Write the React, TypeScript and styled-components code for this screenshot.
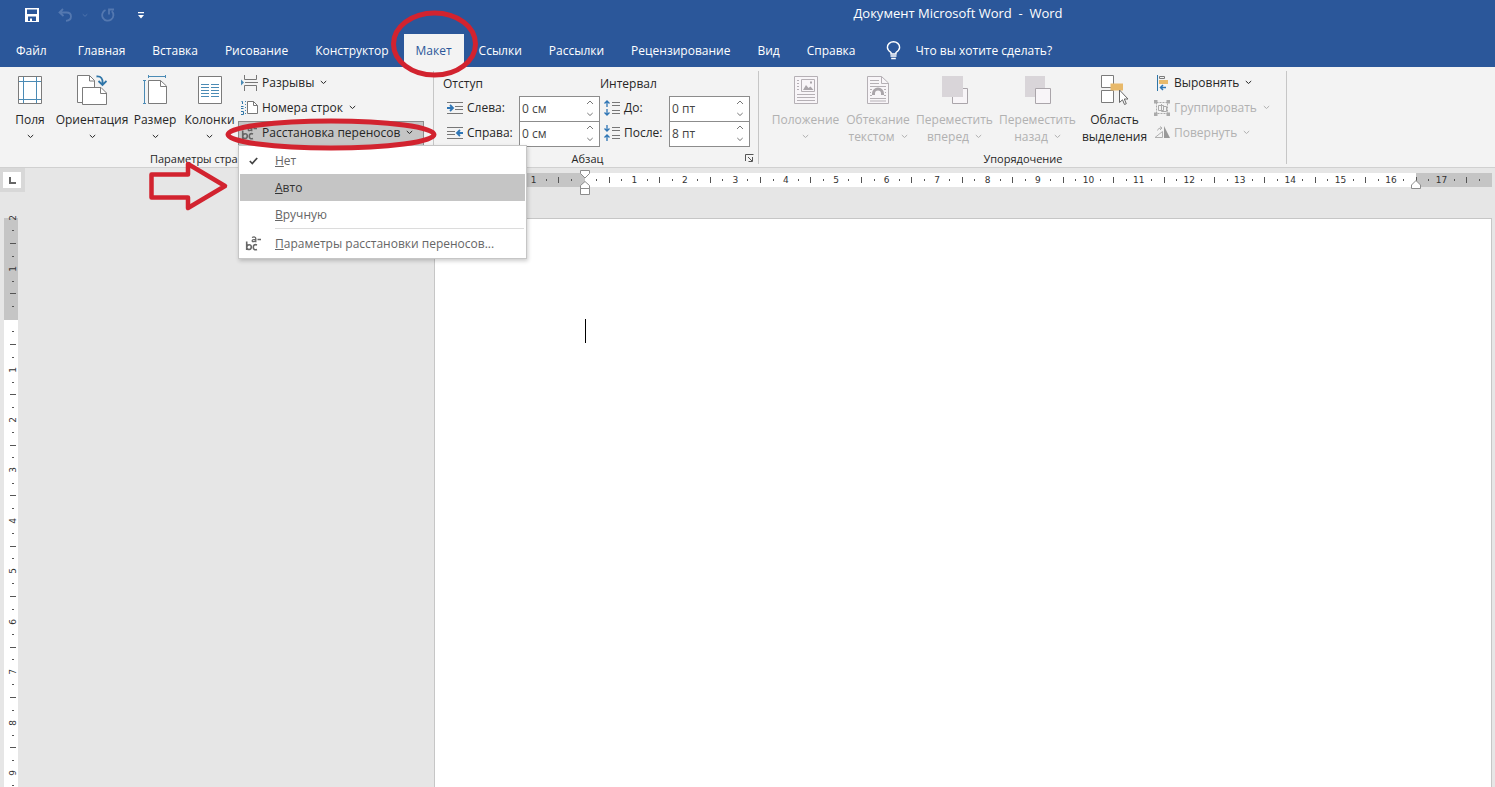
import React from "react";
import styled, { createGlobalStyle } from "styled-components";

const GlobalStyle = createGlobalStyle`
  *, *::before, *::after { box-sizing: border-box; }
  html, body, #root { height: 100%; margin: 0; }
  body {
    font-family: "Open Sans", "Noto Sans", sans-serif;
    font-size: 12px;
    color: #262626;
    background: #e6e6e6;
    overflow: hidden;
  }
  button, input { font: inherit; color: inherit; margin: 0; padding: 0; border: 0; background: none; }
  svg { display: block; flex: none; }
`;

const Shell = styled.div`
  position: relative;
  height: 100vh;
  display: flex;
  flex-direction: column;
  overflow: hidden;
`;

/* ---------- title bar and tabs ---------- */

const Header = styled.header`
  flex: none;
  background: #2b579a;
  color: #fff;
`;

const TitleBar = styled.div`
  display: flex;
  height: 34px;
`;

const QuickAccess = styled.div`
  flex: none;
  display: flex;
  align-items: center;
  width: 421px;
  height: 30px;
  padding-left: 16px;
`;

const QuickButton = styled.button<{ $w: number; $dim?: boolean }>`
  display: flex;
  justify-content: center;
  width: ${(p) => p.$w}px;
  color: ${(p) => (p.$dim ? "#5478b0" : "#fff")};
`;

const Title = styled.h1`
  flex: 1;
  margin: 0;
  font-size: 13px;
  font-weight: 400;
  line-height: 27px;
  text-align: center;
  white-space: pre;
`;

const Tabs = styled.nav`
  display: flex;
  gap: 3px;
  height: 33px;
  padding-left: 4px;
`;

const Tab = styled.button<{ $active?: boolean; $file?: boolean }>`
  flex: none;
  height: 33px;
  padding: 0 12px;
  margin-right: ${(p) => (p.$file ? 4 : 0)}px;
  line-height: 33px;
  white-space: nowrap;
  color: ${(p) => (p.$active ? "#2b579a" : "#fff")};
  background: ${(p) => (p.$active ? "#f3f3f3" : "transparent")};
`;

const TellMe = styled.button`
  display: flex;
  align-items: center;
  gap: 14px;
  margin-left: 16px;
  white-space: nowrap;
`;

/* ---------- ribbon ---------- */

const Ribbon = styled.section`
  flex: none;
  display: flex;
  height: 101px;
  padding-top: 4px;
  background: #f3f3f3;
  border-bottom: 1px solid #d0d0d0;
`;

const Group = styled.div<{ $w: number; $pad: number }>`
  position: relative;
  flex: none;
  display: flex;
  flex-direction: column;
  width: ${(p) => p.$w}px;
  height: 93px;
  padding-left: ${(p) => p.$pad}px;
  border-right: 1px solid #c6c6c6;
`;

const GroupBody = styled.div`
  display: flex;
  height: 75px;
`;

const GroupLabel = styled.div<{ $shift?: number }>`
  padding-right: ${(p) => p.$shift ?? 0}px;
  margin-top: 4px;
  font-size: 11px;
  line-height: 17px;
  text-align: center;
`;

const LargeButton = styled.button<{ $w: number }>`
  display: flex;
  flex-direction: column;
  align-items: center;
  flex: none;
  width: ${(p) => p.$w}px;
  padding-top: 4px;
  line-height: 17px;
  white-space: nowrap;

  &:disabled { color: #b1b1b1; }
  & > svg { margin-bottom: 6px; }
`;

const LabelLine = styled.span`
  display: flex;
  align-items: center;
  justify-content: center;
  gap: 6px;
  height: 17px;
`;

const SmallStack = styled.div<{ $ml: number }>`
  display: flex;
  flex-direction: column;
  align-items: flex-start;
  margin-left: ${(p) => p.$ml}px;
`;

const SmallButton = styled.button<{ $open?: boolean }>`
  display: flex;
  align-items: center;
  gap: 4px;
  height: 25px;
  padding: 0 ${(p) => (p.$open ? 10 : 4)}px 2px 2px;
  border: 1px solid ${(p) => (p.$open ? "#8c8c8c" : "transparent")};
  background: ${(p) => (p.$open ? "#c5c5c5" : "transparent")};
  white-space: nowrap;

  &:disabled { color: #b1b1b1; }
  & > svg:last-child { margin-left: 2px; }
`;

const MenuAnchor = styled.div`
  position: relative;
`;

const Menu = styled.div`
  position: absolute;
  z-index: 5;
  top: 24px;
  left: 0;
  width: 289px;
  padding: 1px;
  background: #fff;
  border: 1px solid #c6c6c6;
  box-shadow: 1px 2px 4px rgba(0, 0, 0, 0.2);
`;

const MenuItem = styled.button<{ $hover?: boolean }>`
  display: grid;
  grid-template-columns: 35px 1fr;
  align-items: center;
  width: 100%;
  height: 27px;
  text-align: left;
  color: ${(p) => (p.$hover ? "#333" : "#666")};
  background: ${(p) => (p.$hover ? "#c5c5c5" : "transparent")};
`;

const MenuRule = styled.div`
  height: 1px;
  margin: 0 1px 1px 35px;
  background: #dcdcdc;
`;

const FieldColumn = styled.div<{ $w: number }>`
  width: ${(p) => p.$w}px;
`;

const FieldTitle = styled.div`
  height: 25px;
  line-height: 25px;
`;

const FieldRow = styled.div`
  display: flex;
  align-items: center;
  height: 25px;
  padding-left: 4px;

  & > svg { margin-bottom: 2px; }
`;

const FieldLabel = styled.label<{ $w: number }>`
  width: ${(p) => p.$w}px;
  padding: 0 0 2px 4px;
  white-space: nowrap;
`;

const Spinner = styled.div`
  display: flex;
  width: 81px;
  height: 26px;
  background: #fff;
  border: 1px solid #8c8c8c;
`;

const SpinInput = styled.input`
  width: 60px;
  padding-left: 2px;
  outline: 0;
  color: #444;
`;

const SpinButtons = styled.div`
  display: flex;
  flex-direction: column;
  width: 19px;
`;

const SpinButton = styled.button`
  flex: 1;
  display: flex;
  align-items: center;
  justify-content: center;
  color: #777;
`;

const Launcher = styled.button`
  position: absolute;
  right: 4px;
  bottom: 1px;
  color: #555;
`;

/* ---------- workspace ---------- */

const Workspace = styled.main`
  flex: 1;
  min-height: 0;
  display: grid;
  grid-template-columns: 434px 1fr;
  grid-template-rows: 50px 1fr;
  padding-right: 3px;
  background: #e6e6e6;
`;

const Corner = styled.div`
  width: 25px;
  height: 24px;
  padding: 4px 4px 4px 3px;
  background: #d8d8d8;
`;

const TabSelector = styled.button`
  display: flex;
  align-items: center;
  justify-content: center;
  width: 18px;
  height: 16px;
  background: #fff;
`;

const HRuler = styled.div`
  position: relative;
  height: 14px;
  margin-top: 5px;
  background: linear-gradient(
    to right,
    #c5c5c5 calc(100% * 3 / 21),
    #fff calc(100% * 3 / 21) calc(100% * 39 / 42),
    #c5c5c5 calc(100% * 39 / 42)
  );
`;

const HMarks = styled.div`
  display: flex;
  height: 14px;
  margin: 0 7px 0 5px;
`;

const VRuler = styled.div`
  display: flex;
  flex-direction: column;
  width: 14px;
  height: 580px;
  margin: -6px 0 0 4px;
  padding-left: 3px;
  background: linear-gradient(to bottom, transparent 6px, #c5c5c5 6px 108px, #fff 108px);
`;

const VRulerCell = styled.div`
  min-height: 0;
`;

const Mark = styled.span<{ $up?: boolean }>`
  flex: 1 1 0;
  min-width: 0;
  min-height: 0;
  display: flex;
  align-items: center;
  justify-content: center;
  font-family: "DejaVu Sans", sans-serif;
  font-size: 9px;
  line-height: 12px;
  white-space: nowrap;
  color: #333;

  & > span { transform: ${(p) => (p.$up ? "rotate(-90deg)" : "none")}; }
`;

const Tick = styled.i<{ $w: number; $h: number }>`
  flex: none;
  width: ${(p) => p.$w}px;
  height: ${(p) => p.$h}px;
  background: #555;
`;

const IndentMarker = styled.div<{ $at: number; $top: number }>`
  position: absolute;
  left: calc(100% * ${(p) => p.$at} / 42 - 5px);
  top: ${(p) => p.$top}px;
`;

const Page = styled.article`
  min-height: 0;
  padding: 100px 150px 0;
  background: #fff;
  border: 1px solid #c6c6c6;
  border-bottom: 0;
`;

const Caret = styled.div`
  width: 1px;
  height: 24px;
  background: #000;
`;

const Annotations = styled.svg`
  position: absolute;
  z-index: 10;
  top: 0;
  left: 0;
  pointer-events: none;
`;

/* ---------- icons ---------- */

const Chevron = ({ up, size = 7 }: { up?: boolean; size?: number }) => (
  <svg width={size} height="5" viewBox="0 0 7 5" fill="none" stroke="currentColor" strokeWidth="1">
    <path d={up ? "M.5 4L3.5 1L6.5 4" : "M.8 1L3.5 3.500L6.200 1"} />
  </svg>
);

const SaveIcon = () => (
  <svg width="14" height="14" viewBox="0 0 14 14">
    <path fill="currentColor" fillRule="evenodd" d="M0 0H14V14H0ZM2 1.5V6H12V1.5ZM3 8.5V13H5V10.5H7V13H11V8.5Z" />
  </svg>
);

const UndoIcon = () => (
  <svg width="14" height="14" viewBox="0 0 14 14" fill="none" stroke="currentColor" strokeWidth="1.8">
    <path d="M5 1L1.5 4.5L5.5 8M1.5 4.5H8.5C11.5 4.5 13 6.3 13 8.5S11.5 12.5 8 12.8" />
  </svg>
);

const RedoIcon = () => (
  <svg width="14" height="14" viewBox="0 0 14 14" fill="none" stroke="currentColor" strokeWidth="1.8">
    <path d="M4.500 2A5.600 5.600 0 1 0 10.800 3.200M8 6.500V1.500H13" />
  </svg>
);

const CustomizeIcon = () => (
  <svg width="6" height="7" viewBox="0 0 6 7" fill="currentColor">
    <path d="M0 0H6V1.3H0ZM0 3H6L3 6.5Z" />
  </svg>
);

const BulbIcon = () => (
  <svg width="15" height="19" viewBox="0 0 15 19" fill="none" stroke="currentColor" strokeWidth="1.4">
    <path d="M5 13V11.5C3 10 1.4 8.8 1.4 6.4A6 5.6 0 0 1 13.6 6.4C13.6 8.8 12 10 10 11.5V13Z" />
    <path d="M4.5 15H10.5M5.2 17.5H9.8" strokeWidth="1.6" />
  </svg>
);

const MarginsIcon = () => (
  <svg width="24" height="30" viewBox="0 0 24 30" fill="none">
    <path d="M.5 1.5H23.5V28.5H.5Z" fill="#fff" stroke="#7b7b7b" />
    <path d="M5.5 2V28M18.5 2V28M1 6.5H23M1 24.5H23" stroke="#4b8bb5" />
  </svg>
);

const OrientationIcon = () => (
  <svg width="30" height="30" viewBox="0 0 30 30" fill="none" stroke="#7b7b7b">
    <path d="M.5 .5H12.5L17.5 5.5V27.5H.5Z" fill="#fff" />
    <path d="M12.5 .5V6H17.5" />
    <path d="M5.5 12.5H24L29.5 18V29.5H5.5Z" fill="#fff" />
    <path d="M23.5 12.5V18.5H29.5" />
    <path d="M19.5 1.5C24 1 26 3.5 25.5 9M21.5 6L25.5 10L29.5 6" stroke="#2e75a8" strokeWidth="1.8" />
  </svg>
);

const SizeIcon = () => (
  <svg width="24" height="30" viewBox="0 0 24 30" fill="none" stroke="#4b8bb5">
    <path d="M5 1.5H23M5.5 0V3M22.5 0V3M1.5 6V28M0 5.500H3M0 28.500H3" />
    <g stroke="#7b7b7b">
      <path d="M5.5 5.500H17.500L23.500 11V28.500H5.500Z" fill="#fff" />
      <path d="M17.500 5.500V11.500H23.500" />
    </g>
  </svg>
);

const ColumnsIcon = () => (
  <svg width="24" height="30" viewBox="0 0 24 30" fill="none">
    <path d="M.5 1.500H23.500V28.500H.5Z" fill="#fff" stroke="#7b7b7b" />
    <path d="M3 9.500H11M3 12.500H11M3 15.500H11M3 18.500H11M3 21.500H11M13 9.500H21M13 12.500H21M13 15.500H21M13 18.500H21M13 21.500H21" stroke="#4b8bb5" />
  </svg>
);

const BreaksIcon = () => (
  <svg width="17" height="16" viewBox="0 0 17 16" fill="none" stroke="#777">
    <path d="M3.500 0V4.500H15.500V0M3.500 16V10.500H15.500V16M4 7.500H17" />
    <path d="M0 4.500L3 7.500L0 10.500Z" fill="#4b8bb5" stroke="none" />
  </svg>
);

const LineNumbersIcon = () => (
  <svg width="17" height="16" viewBox="0 0 17 16" fill="none" stroke="#777">
    <path d="M6.500 1.500H12.500L16.500 5.500V13.500H6.500Z" fill="#fff" />
    <path d="M12.500 1.500V5.500H16.500" />
    <path d="M.5 1.500H1.500V4M0 6.500H2.500M0 8.500H2.500M0 11.500H2.500V14.500H0" stroke="#2e75a8" />
    <path d="M4.500 1V15" stroke="#4b8bb5" strokeDasharray="1 2" />
  </svg>
);

const HyphenIcon = () => (
  <svg width="17" height="16" viewBox="0 0 17 16" fill="none" stroke="#666" strokeWidth="1.600">
    <path d="M1.700 5.500V14M1.700 11C2.200 8 6.300 8 6.300 11S2.200 14.500 1.700 11.500M12 9C9.500 8 8.300 9.300 8.300 11.200S9.500 14.500 12 13.400" />
    <path d="M7 1.500C9 .6 10.800 .8 10.800 2.500V6.200M10.800 3.300C8 3.300 7 4 7.200 5S10 6 10.800 4.500M12.500 3.500H16" strokeWidth="1.300" />
  </svg>
);

const IndentIcon = ({ right }: { right?: boolean }) => (
  <svg width="16" height="14" viewBox="0 0 16 14" fill="none" stroke="#777">
    {right ? (
      <>
        <path d="M0 1.500H16M0 5.500H8M0 8.500H8M0 12.500H16" />
        <path d="M16 7H10M13 4L10 7L13 10" stroke="#2e75b5" strokeWidth="1.800" />
      </>
    ) : (
      <>
        <path d="M0 1.500H16M8 5.500H16M8 8.500H16M0 12.500H16" />
        <path d="M0 7H6M3 4L6 7L3 10" stroke="#2e75b5" strokeWidth="1.800" />
      </>
    )}
  </svg>
);

const SpacingIcon = ({ after }: { after?: boolean }) => (
  <svg width="16" height="16" viewBox="0 0 16 16" fill="none" stroke="#777">
    <path d="M8 2.500H16M8 5.500H16M8 10.500H16M8 13.500H16" />
    <path
      d={after ? "M3 0V6M.5 3.500L3 6L5.500 3.500M3 16V10M.5 12.500L3 10L5.500 12.500" : "M3 7V1M.5 3.500L3 1L5.500 3.500M3 9V15M.5 12.500L3 15L5.500 12.500"}
      stroke="#2e75b5"
      strokeWidth="1.300"
    />
  </svg>
);

const PositionIcon = () => (
  <svg width="24" height="30" viewBox="0 0 24 30" fill="none" stroke="#b5b0b5">
    <path d="M.5 1.500H23.500V28.500H.5Z" fill="#f8f5f8" />
    <path d="M7.500 4.500H20.500V16.500H7.500ZM3 5.500H5M3 8.500H5M3 11.500H5M3 14.500H5M3 19.500H21M3 22.500H21M3 25.500H21" />
    <path d="M9 15L12 10L14.500 13L16.500 11.500L19.500 15ZM16 6.500H18V8.500H16Z" fill="#aaa5aa" stroke="none" />
  </svg>
);

const WrapIcon = () => (
  <svg width="22" height="30" viewBox="0 0 22 30" fill="none" stroke="#b5b0b5">
    <path d="M.5 1.500H14.500L21.500 8V28.500H.5Z" fill="#f8f5f8" />
    <path d="M14.500 1.500V8.500H21.500M3 5.500H12M3 8.500H12M3 11.500H19M3 14.500H5M17 14.500H19M3 17.500H4M18 17.500H19M3 20.500H5M17 20.500H19M3 23.500H19M3 26H19" />
    <path d="M6.500 20V18.500A4.500 4.500 0 0 1 15.500 18.500V20" stroke="#aaa5aa" strokeWidth="3" />
  </svg>
);

const ForwardIcon = () => (
  <svg width="26" height="30" viewBox="0 0 26 30">
    <path d="M10.500 13.500H25.500V28.500H10.500Z" fill="#f8f5f8" stroke="#aaa5aa" />
    <path d="M0 1H21V22H0Z" fill="#d9d5d9" />
  </svg>
);

const BackwardIcon = () => (
  <svg width="26" height="30" viewBox="0 0 26 30">
    <path d="M0 1H20V22H0Z" fill="#d9d5d9" />
    <path d="M10.500 13.500H25.500V28.500H10.500Z" fill="#f8f5f8" stroke="#aaa5aa" />
  </svg>
);

const SelectionPaneIcon = () => (
  <svg width="28" height="30" viewBox="0 0 28 30">
    <path d="M.5 .5H12.500V12.500H.5ZM.5 15.500H12.500V27.500H.5Z" fill="#fff" stroke="#7b7b7b" />
    <path d="M9.500 8.500H22V15.500H9.500Z" fill="#e8b96a" />
    <path d="M18.500 15V27.500L21.500 24.800L23.500 29.500L25.300 28.700L23.300 24H27Z" fill="#fff" stroke="#666" />
  </svg>
);

const AlignIcon = () => (
  <svg width="16" height="16" viewBox="0 0 16 16" fill="none">
    <path d="M3.500 0V16" stroke="#2e75a8" />
    <path d="M5.500 1.500H10.500V3.500H5.500Z" stroke="#7b7b7b" />
    <path d="M5 5H14V9H5Z" fill="#e8b96a" />
    <path d="M12 12.500H6.500M9 10L6.500 12.500L9 15" stroke="#2e75b5" strokeWidth="1.500" />
  </svg>
);

const GroupIcon = () => (
  <svg width="16" height="16" viewBox="0 0 16 16" fill="none" stroke="#aaa">
    <path d="M2.500 2.500H13.500V13.500H2.500Z" strokeDasharray="2 1" />
    <path d="M4.500 5.500H9.500V10.500H4.500ZM7.500 4V11.500H12.500V6.500H10" />
    <path d="M0 0H3.500V3.500H0ZM12.500 0H16V3.500H12.500ZM0 12.500H3.500V16H0ZM12.500 12.500H16V16H12.500Z" fill="#aaa" stroke="none" />
  </svg>
);

const RotateIcon = () => (
  <svg width="16" height="14" viewBox="0 0 16 14" fill="none" stroke="#b0b0b0">
    <path d="M1 11.500H8.500V5.500ZM3.500 4.500C4 2.500 5.500 2 8 2M6 .5L8 2L6 4" />
    <path d="M10 0V12H16Z" fill="#999" stroke="none" />
  </svg>
);

const LauncherIcon = () => (
  <svg width="9" height="9" viewBox="0 0 9 9" fill="none" stroke="currentColor">
    <path d="M.5 7V.5H8.500M3 3L7 7M3.500 7.500H7.500V3" />
  </svg>
);

const CheckIcon = () => (
  <svg width="9" height="8" viewBox="0 0 9 8" fill="none" stroke="#444" strokeWidth="1.700">
    <path d="M.8 4L3.300 6.500L8.200 1" />
  </svg>
);

const MenuIconSlot = styled.span`
  padding-left: 5px;

  & > svg[width="9"] { margin-left: 4px; }
`;

/* ---------- pieces ---------- */

const SpinField = ({ id, label, value, icon, labelWidth }: { id: string; label: string; value: string; icon: React.ReactNode; labelWidth: number }) => (
  <FieldRow>
    {icon}
    <FieldLabel htmlFor={id} $w={labelWidth}>{label}</FieldLabel>
    <Spinner>
      <SpinInput id={id} type="text" defaultValue={value} />
      <SpinButtons>
        <SpinButton aria-label="Увеличить"><Chevron up size={8} /></SpinButton>
        <SpinButton aria-label="Уменьшить"><Chevron size={8} /></SpinButton>
      </SpinButtons>
    </Spinner>
  </FieldRow>
);

const rulerMark = (quarter: number, vertical: boolean) => {
  if (quarter === 0) return null;
  if (quarter % 4 === 0) return <span>{Math.abs(quarter / 4)}</span>;
  if (quarter % 2 === 0) return vertical ? <Tick $w={6} $h={1} /> : <Tick $w={1} $h={6} />;
  return vertical ? <Tick $w={2} $h={1} /> : <Tick $w={1} $h={2} />;
};

const hQuarters = Array.from({ length: 83 }, (_, i) => i - 11);
const vQuarters = Array.from({ length: 46 }, (_, i) => i - 8);
const tabs = ["Файл", "Главная", "Вставка", "Рисование", "Конструктор", "Макет", "Ссылки", "Рассылки", "Рецензирование", "Вид", "Справка"];

export default function App() {
  return (
    <Shell>
      <GlobalStyle />
      <Header>
        <TitleBar>
          <QuickAccess>
            <QuickButton $w={32} aria-label="Сохранить"><SaveIcon /></QuickButton>
            <QuickButton $w={34} $dim aria-label="Отменить"><UndoIcon /></QuickButton>
            <QuickButton $w={6} $dim aria-label="Список отмены"><Chevron size={6} /></QuickButton>
            <QuickButton $w={40} $dim aria-label="Повторить"><RedoIcon /></QuickButton>
            <QuickButton $w={26} aria-label="Настройка панели"><CustomizeIcon /></QuickButton>
          </QuickAccess>
          <Title>{"Документ Microsoft Word  -  Word"}</Title>
        </TitleBar>
        <Tabs>
          {tabs.map((t) => (
            <Tab key={t} $active={t === "Макет"} $file={t === "Файл"}>{t}</Tab>
          ))}
          <TellMe><BulbIcon />Что вы хотите сделать?</TellMe>
        </Tabs>
      </Header>

      <Ribbon>
        <Group $w={434} $pad={4}>
          <GroupBody>
            <LargeButton $w={52}><MarginsIcon />Поля<LabelLine><Chevron /></LabelLine></LargeButton>
            <LargeButton $w={72}><OrientationIcon />Ориентация<LabelLine><Chevron /></LabelLine></LargeButton>
            <LargeButton $w={54}><SizeIcon />Размер<LabelLine><Chevron /></LabelLine></LargeButton>
            <LargeButton $w={55}><ColumnsIcon />Колонки<LabelLine><Chevron /></LabelLine></LargeButton>
            <SmallStack $ml={1}>
              <SmallButton><BreaksIcon />Разрывы<Chevron /></SmallButton>
              <SmallButton><LineNumbersIcon />Номера строк<Chevron /></SmallButton>
              <MenuAnchor>
                <SmallButton $open aria-haspopup="menu" aria-expanded="true"><HyphenIcon />Расстановка переносов<Chevron /></SmallButton>
                <Menu role="menu">
                  <MenuItem role="menuitem"><MenuIconSlot><CheckIcon /></MenuIconSlot><span><u>Н</u>ет</span></MenuItem>
                  <MenuItem role="menuitem" $hover><MenuIconSlot /><span><u>А</u>вто</span></MenuItem>
                  <MenuItem role="menuitem"><MenuIconSlot /><span><u>В</u>ручную</span></MenuItem>
                  <MenuRule />
                  <MenuItem role="menuitem"><MenuIconSlot><HyphenIcon /></MenuIconSlot><span><u>П</u>араметры расстановки переносов...</span></MenuItem>
                </Menu>
              </MenuAnchor>
            </SmallStack>
          </GroupBody>
          <GroupLabel $shift={20}>Параметры страницы</GroupLabel>
        </Group>

        <Group $w={325} $pad={9}>
          <GroupBody>
            <FieldColumn $w={157}>
              <FieldTitle>Отступ</FieldTitle>
              <SpinField id="left" label="Слева:" value="0 см" icon={<IndentIcon />} labelWidth={56} />
              <SpinField id="right" label="Справа:" value="0 см" icon={<IndentIcon right />} labelWidth={56} />
            </FieldColumn>
            <FieldColumn $w={150}>
              <FieldTitle>Интервал</FieldTitle>
              <SpinField id="before" label="До:" value="0 пт" icon={<SpacingIcon />} labelWidth={49} />
              <SpinField id="after" label="После:" value="8 пт" icon={<SpacingIcon after />} labelWidth={49} />
            </FieldColumn>
          </GroupBody>
          <GroupLabel $shift={26}>Абзац</GroupLabel>
          <Launcher aria-label="Параметры абзаца"><LauncherIcon /></Launcher>
        </Group>

        <Group $w={528} $pad={9}>
          <GroupBody>
            <LargeButton $w={75} disabled><PositionIcon />Положение<LabelLine><Chevron /></LabelLine></LargeButton>
            <LargeButton $w={70} disabled><WrapIcon />Обтекание<LabelLine>текстом<Chevron /></LabelLine></LargeButton>
            <LargeButton $w={83} disabled><ForwardIcon />Переместить<LabelLine>вперед<Chevron /></LabelLine></LargeButton>
            <LargeButton $w={83} disabled><BackwardIcon />Переместить<LabelLine>назад<Chevron /></LabelLine></LargeButton>
            <LargeButton $w={71}><SelectionPaneIcon />Область<LabelLine>выделения</LabelLine></LargeButton>
            <SmallStack $ml={1}>
              <SmallButton><AlignIcon />Выровнять<Chevron /></SmallButton>
              <SmallButton disabled><GroupIcon />Группировать<Chevron /></SmallButton>
              <SmallButton disabled><RotateIcon />Повернуть<Chevron /></SmallButton>
            </SmallStack>
          </GroupBody>
          <GroupLabel $shift={8}>Упорядочение</GroupLabel>
        </Group>
      </Ribbon>

      <Workspace>
        <Corner>
          <TabSelector aria-label="Табуляция">
            <svg width="7" height="7" viewBox="0 0 7 7" fill="none" stroke="#666" strokeWidth="2"><path d="M1 0V6H7" /></svg>
          </TabSelector>
        </Corner>
        <div>
          <HRuler>
            <HMarks>{hQuarters.map((q) => <Mark key={q}>{rulerMark(q, false)}</Mark>)}</HMarks>
            <IndentMarker $at={6} $top={-3}>
              <svg width="10" height="25" viewBox="0 0 10 25" fill="#fff" stroke="#8c8c8c">
                <path d="M.5 .5H9.500V3.500L5 8L.5 3.500ZM5 11.500L9.500 15.500V18.500H.5V15.500ZM.5 18.500H9.500V24.500H.5Z" />
              </svg>
            </IndentMarker>
            <IndentMarker $at={39} $top={7}>
              <svg width="10" height="9" viewBox="0 0 10 9" fill="#fff" stroke="#8c8c8c">
                <path d="M5 .5L9.500 5V8.500H.5V5Z" />
              </svg>
            </IndentMarker>
          </HRuler>
        </div>
        <VRulerCell>
          <VRuler>{vQuarters.map((q) => <Mark key={q} $up>{rulerMark(q, true)}</Mark>)}</VRuler>
        </VRulerCell>
        <Page><Caret /></Page>
      </Workspace>

      <Annotations width="480" height="220" viewBox="0 0 480 220" fill="none" stroke="#d2232f" strokeWidth="5">
        <ellipse cx="434.500" cy="44" rx="41" ry="31" />
        <ellipse cx="331" cy="134.500" rx="103" ry="13.500" />
        <path d="M151.500 174.500H188V164L225 186L188 208V197.500H151.500Z" strokeWidth="4.500" strokeLinejoin="round" />
      </Annotations>
    </Shell>
  );
}
